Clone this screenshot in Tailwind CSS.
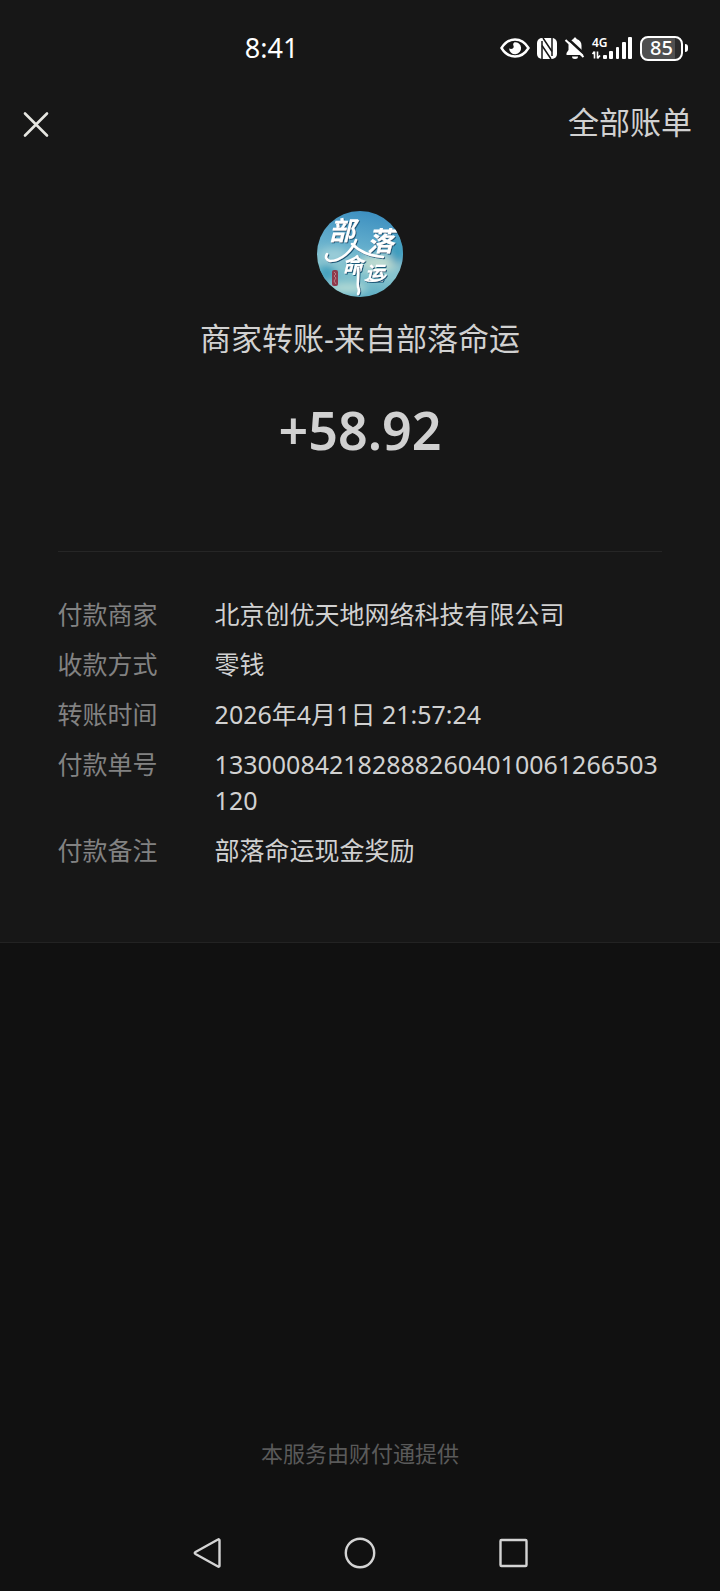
<!DOCTYPE html>
<html lang="zh-CN">
<head>
    <meta charset="UTF-8">
    <meta name="viewport" content="width=device-width, initial-scale=1.0">
    <title>账单详情</title>
    <script src="https://cdn.jsdelivr.net/npm/@tailwindcss/browser@4"></script>
    <style>
        body {
            font-family: 'Noto Sans', 'Noto Sans CJK SC', sans-serif;
        }
    </style>
</head>
<body class="bg-[#111111] text-[#d1d1d1]">
    <div class="min-h-screen flex flex-col">

        <div class="bg-[#171717] border-b border-[#232323] pb-[74px]">
            <!-- 状态栏 -->
            <div class="h-24 pl-[34%] pr-8 flex items-center justify-between text-white">
                <span class="text-[27px] leading-9">8:41</span>
                <div class="flex items-center">
                    <svg class="w-[30px] h-6" viewBox="0 0 30 24" fill="none">
                        <path d="M1.500 12C5 6.300 9.500 3.500 15 3.500S25 6.300 28.500 12C25 17.700 20.500 20.500 15 20.500S5 17.700 1.500 12Z" stroke="#fff" stroke-width="2.400"/>
                        <path d="M14.500 6.200a6 6 0 1 1-5.400 6.300c2 1 4.300.4 4.600-1.500.2-1.300-.8-1.700-.5-3 .1-.8.600-1.400 1.300-1.800Z" fill="#fff"/>
                    </svg>
                    <svg class="ml-1.5 w-[22px] h-6" viewBox="0 0 22 24" fill="none">
                        <rect x="1" y="2" width="20" height="21" rx="5" fill="#fff"/>
                        <path d="M6 5v18M16 20V2" stroke="#171717" stroke-width="1.500"/>
                        <path d="M7 2L16 15.500M6 9.500L15 23" stroke="#171717" stroke-width="1.500"/>
                    </svg>
                    <svg class="ml-1.5 w-[22px] h-6" viewBox="0 0 22 24" fill="none">
                        <path d="M7 4.500C8.200 3.600 9 3.300 9.500 3c0-2 3-2 3 0 3.500.9 5 3.500 5 6.500v4.500l2 3v2h-17v-2l2-3V9.500C4.500 7.500 5.500 5.600 7 4.500Z" fill="#fff"/>
                        <path d="M8 20.500h6a3 2.500 0 0 1-6 0Z" fill="#fff"/>
                        <path d="M2.500 1.500L22 19.500" stroke="#171717" stroke-width="2.500"/>
                        <path d="M1.500 4L19.500 21" stroke="#fff" stroke-width="2"/>
                    </svg>
                    <svg class="ml-1 w-[42px] h-6 overflow-visible" viewBox="0 0 42 24" fill="#fff">
                        <text x="2" y="11" font-size="12" font-weight="600">4G</text>
                        <path d="M4.500 15.500v7M2.500 18l2-2.500M7.500 15.500v7M7.500 22.500l2.500-3" stroke="#fff" stroke-width="1.600" fill="none"/>
                        <rect x="13" y="19" width="4" height="4" rx="1"/>
                        <rect x="19" y="15" width="4" height="8" rx="1"/>
                        <rect x="26" y="11" width="3" height="12" rx="1"/>
                        <rect x="32" y="6" width="4" height="17" rx="1"/>
                        <rect x="38" y="1" width="4" height="22" rx="1"/>
                    </svg>
                    <div class="ml-2 flex items-center gap-0.5">
                        <div class="w-[43px] h-[25px] rounded-lg border-2 border-white bg-linear-to-r from-[#505050] from-85% to-[#2b2b2b] to-85% flex items-center justify-center text-xl leading-5 font-medium">85</div>
                        <div class="w-[3px] h-2 rounded-r-sm bg-white"></div>
                    </div>
                </div>
            </div>

            <!-- 导航 -->
            <header class="h-14 pl-5 pr-7 flex items-center justify-between">
                <button type="button" aria-label="关闭">
                    <svg class="w-8 h-8" viewBox="0 0 32 32" fill="none" stroke="#e6e6e1" stroke-width="2.600" stroke-linecap="round">
                        <path d="M5 5.500l22 22M27 5.500L5 27.500"/>
                    </svg>
                </button>
                <a href="#" class="text-[31px] leading-10 pb-1">全部账单</a>
            </header>

            <main class="px-[8%]">
                <div class="pt-[59px] flex flex-col items-center">
                    <svg class="w-[86px] h-[86px] rounded-full" viewBox="0 0 86 86">
                        <defs>
                            <linearGradient id="sky" x1="0.600" y1="0" x2="0.400" y2="1">
                                <stop offset="0" stop-color="#3c8fc0"/>
                                <stop offset="0.400" stop-color="#62adcc"/>
                                <stop offset="0.700" stop-color="#86c4ce"/>
                                <stop offset="1" stop-color="#55a9c2"/>
                            </linearGradient>
                            <filter id="soft" x="-30%" y="-30%" width="160%" height="160%"><feGaussianBlur stdDeviation="4"/></filter>
                            <filter id="shade"><feDropShadow dx="1" dy="1" stdDeviation="0.600" flood-color="#1f5878"/></filter>
                        </defs>
                        <rect width="86" height="86" fill="url(#sky)"/>
                        <g filter="url(#soft)">
                            <ellipse cx="17" cy="44" rx="14" ry="7" fill="#9ccdd8"/>
                            <ellipse cx="64" cy="52" rx="22" ry="8" fill="#bfdcd0"/>
                            <ellipse cx="30" cy="77" rx="20" ry="6" fill="#b5dbd6"/>
                            <ellipse cx="80" cy="40" rx="8" ry="14" fill="#3e9cbd"/>
                            <ellipse cx="10" cy="62" rx="8" ry="8" fill="#3f9fbd"/>
                        </g>
                        <g fill="#fff" font-weight="600" font-style="italic" filter="url(#shade)">
                            <text x="12" y="29" font-size="26">部</text>
                            <text x="50" y="40" font-size="27">落</text>
                            <text x="25" y="62" font-size="21">命</text>
                            <text x="48" y="69" font-size="19">运</text>
                        </g>
                        <g fill="none" stroke="#fff" stroke-linecap="round" filter="url(#shade)">
                            <path d="M39 29C35 40 24 50 13 50c-4-1-5-4-3-7" stroke-width="2.500"/>
                            <path d="M35 33c7 7 17 12 31 13" stroke-width="2.500"/>
                            <path d="M41 57c1 8-1 14 0 19 1 3 2 4 0 7" stroke-width="2.500"/>
                            <path d="M48 69c9 3 18 0 21-5" stroke-width="1.500"/>
                        </g>
                        <rect x="15" y="59" width="6" height="16" rx="2" fill="#8f3a4c"/>
                        <path d="M17 61l2 2-2 2 2 2-2 3 2 3" stroke="#c58f98" stroke-width="0.800" fill="none"/>
                    </svg>
                    <h1 class="mt-5 text-[31px] leading-[42px]">商家转账-来自部落命运</h1>
                    <p class="mt-[39px] text-[52px] leading-[64px] font-semibold">+58.92</p>
                </div>

                <dl class="mt-[89px] border-t border-[#262626] pt-11 grid grid-cols-[157px_1fr] gap-y-3.5 text-[25px] leading-9">
                    <dt class="text-[#828282]">付款商家</dt>
                    <dd>北京创优天地网络科技有限公司</dd>
                    <dt class="text-[#828282]">收款方式</dt>
                    <dd>零钱</dd>
                    <dt class="text-[#828282]">转账时间</dt>
                    <dd>2026年4月1日 21:57:24</dd>
                    <dt class="text-[#828282]">付款单号</dt>
                    <dd class="break-all">1330008421828882604010061266503120</dd>
                    <dt class="text-[#828282]">付款备注</dt>
                    <dd>部落命运现金奖励</dd>
                </dl>
            </main>
        </div>

        <footer class="mt-auto">
            <p class="text-center text-[22px] leading-8 text-[#5a5a5a]">本服务由财付通提供</p>
            <!-- 系统导航键 -->
            <nav class="mt-[46px] h-[76px] px-[18%] grid grid-cols-3 items-center justify-items-center">
                <button type="button" aria-label="返回">
                    <svg class="w-8 h-8" viewBox="0 0 32 32" fill="none" stroke="#d4d4d4" stroke-width="2.400" stroke-linejoin="round">
                        <path d="M28 2.500c.8-.5 1.500 0 1.500.8v25.400c0 .8-.7 1.300-1.500.8L5.500 17c-1-.6-1-1.400 0-2Z"/>
                    </svg>
                </button>
                <button type="button" aria-label="主页">
                    <svg class="w-8 h-8" viewBox="0 0 32 32" fill="none" stroke="#d4d4d4" stroke-width="2.400">
                        <circle cx="16" cy="16" r="14.200"/>
                    </svg>
                </button>
                <button type="button" aria-label="最近任务">
                    <svg class="w-8 h-8" viewBox="0 0 32 32" fill="none" stroke="#d4d4d4" stroke-width="2.400">
                        <rect x="2.500" y="3" width="26" height="26" rx="1"/>
                    </svg>
                </button>
            </nav>
        </footer>
    </div>
</body>
</html>
